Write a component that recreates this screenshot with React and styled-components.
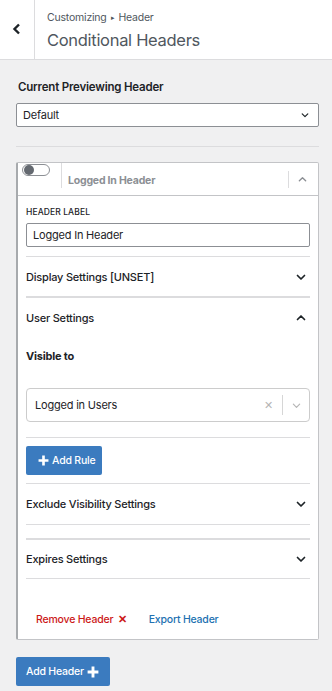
import React from 'react';
import styled, { createGlobalStyle } from 'styled-components';

const GlobalStyle = createGlobalStyle`
  body {
    margin: 0;
    background: #f0f0f1;
    font-family: Inter, "Noto Sans", sans-serif;
    color: #1d2327;
    letter-spacing: -0.2px;
  }
  * { box-sizing: border-box; }
`;

function Chevron({ up, size = 10, color = '#1d2327', width = 1.7 }) {
  return (
    <svg width={size} height={size} viewBox="0 0 10 10">
      <path
        d={up ? 'M1.5 6.5 L5 3 L8.5 6.5' : 'M1.5 3.5 L5 7 L8.5 3.5'}
        fill="none"
        stroke={color}
        strokeWidth={width}
        strokeLinecap="round"
        strokeLinejoin="round"
      />
    </svg>
  );
}

function Plus({ size = 11 }) {
  return (
    <svg width={size} height={size} viewBox="0 0 10 10">
      <path d="M5 0.5 V9.5 M0.5 5 H9.5" stroke="#fff" strokeWidth="2.4" />
    </svg>
  );
}

function App() {
  return (
    <>
      <GlobalStyle />
      <TopBar>
        <BackButton>
          <svg width="10" height="12" viewBox="0 0 10 12">
            <path d="M7 1.5 L2.5 6 L7 10.5" fill="none" stroke="#1d2327" strokeWidth="2.4" />
          </svg>
        </BackButton>
        <TitleBlock>
          <Crumb>
            Customizing<Arrow>▸</Arrow>Header
          </Crumb>
          <PageTitle>Conditional Headers</PageTitle>
        </TitleBlock>
      </TopBar>

      <Content>
        <SectionLabel>Current Previewing Header</SectionLabel>
        <PlainSelect>
          <span>Default</span>
          <Chevron size={8} width={1.5} />
        </PlainSelect>
        <Divider />

        <Card>
          <CardHeader>
            <ToggleCell>
              <Toggle />
            </ToggleCell>
            <CardTitle>Logged In Header</CardTitle>
            <CollapseCell>
              <Chevron up size={9} color="#8c8f94" width={1.5} />
            </CollapseCell>
          </CardHeader>

          <CardBody>
            <FieldLabel>Header Label</FieldLabel>
            <TextInput>Logged In Header</TextInput>

            <Panel $mt={9} $top="thin">
              <PanelRow>
                <span>Display Settings [UNSET]</span>
                <Chevron />
              </PanelRow>
            </Panel>

            <Panel $top="thick">
              <PanelRow>
                <span>User Settings</span>
                <Chevron up />
              </PanelRow>
              <RuleLabel>Visible to</RuleLabel>
              <MultiSelect>
                <span>Logged in Users</span>
                <SelectTools>
                  <ClearX>✕</ClearX>
                  <ToolSep />
                  <Chevron size={9} color="#b5b5b5" width={1.3} />
                </SelectTools>
              </MultiSelect>
            </Panel>

            <RuleArea>
              <BlueButton $pad="0 7px 0 12px">
                <Plus />
                Add Rule
              </BlueButton>
            </RuleArea>

            <Panel $bottom>
              <PanelRow $h={40}>
                <span>Exclude Visibility Settings</span>
                <Chevron />
              </PanelRow>
            </Panel>

            <Panel $mt={13} $top="thick">
              <PanelRow $h={38}>
                <span>Expires Settings</span>
                <Chevron />
              </PanelRow>
            </Panel>

            <Footer>
              <FooterLink $danger>
                Remove Header <RemoveX>✕</RemoveX>
              </FooterLink>
              <FooterLink>Export Header</FooterLink>
            </Footer>
          </CardBody>
        </Card>

        <AddHeaderRow>
          <BlueButton $pad="0 11px 0 10px">
            Add Header
            <Plus size={12} />
          </BlueButton>
        </AddHeaderRow>
      </Content>
    </>
  );
}

const TopBar = styled.div`
  display: flex;
  height: 60px;
  background: #fff;
  border-bottom: 1px solid #dcdcde;
`;

const BackButton = styled.div`
  width: 35px;
  display: flex;
  align-items: center;
  justify-content: center;
  border-right: 1px solid #dcdcde;
  padding-bottom: 2px;
`;

const TitleBlock = styled.div`
  display: flex;
  flex-direction: column;
  padding: 11px 0 0 12px;
`;

const Crumb = styled.div`
  font-size: 10.5px;
  line-height: 14px;
  color: #50575e;
`;

const Arrow = styled.span`
  display: inline-block;
  font-size: 7px;
  margin: 0 4px;
  position: relative;
  top: -1px;
`;

const PageTitle = styled.div`
  font-size: 16.5px;
  line-height: 22px;
  margin-top: 3px;
  color: #50575e;
  font-weight: 400;
  letter-spacing: -0.3px;
`;

const Content = styled.div`
  padding: 20px 13px 20px 16px;
`;

const SectionLabel = styled.div`
  font-size: 11.5px;
  line-height: 14px;
  font-weight: 600;
  color: #1d2327;
  margin-left: 2px;
`;

const PlainSelect = styled.div`
  margin-top: 9px;
  height: 24px;
  background: #fff;
  border: 1px solid #8c8f94;
  border-radius: 2px;
  display: flex;
  align-items: center;
  justify-content: space-between;
  padding: 0 9px 0 6px;
  font-size: 11px;
`;

const Divider = styled.div`
  height: 1px;
  background: #dcdcde;
  margin: 19px 0 15px;
`;

const Card = styled.div`
  background: #fff;
  border: 1px solid #c3c4c7;
  border-left: 2px solid #a7aaad;
  border-radius: 2px;
`;

const CardHeader = styled.div`
  display: flex;
  align-items: stretch;
  height: 33px;
  border-bottom: 1px solid #c3c4c7;
`;

const ToggleCell = styled.div`
  width: 44px;
  padding: 1px 0 0 4px;
  border-right: 1px solid #dcdcde;
  margin-bottom: 7px;
`;

const Toggle = styled.div`
  width: 28px;
  height: 12px;
  border: 1px solid #8c8f94;
  border-radius: 7px;
  position: relative;
  &::after {
    content: '';
    position: absolute;
    left: 1px;
    top: 0px;
    width: 10px;
    height: 10px;
    border-radius: 50%;
    background: #646970;
  }
`;

const CardTitle = styled.div`
  flex: 1;
  display: flex;
  align-items: center;
  padding: 2px 0 0 6px;
  font-size: 10.5px;
  font-weight: 700;
  color: #8c8f94;
`;

const CollapseCell = styled.div`
  width: 30px;
  margin: 8px 0 7px;
  border-left: 1px solid #dcdcde;
  display: flex;
  align-items: center;
  justify-content: center;
  padding-right: 2px;
`;

const CardBody = styled.div`
  padding: 0 8px 0 8px;
`;

const FieldLabel = styled.div`
  padding-top: 10px;
  font-size: 8.5px;
  line-height: 12px;
  font-weight: 500;
  text-transform: uppercase;
  letter-spacing: 0.1px;
`;

const TextInput = styled.div`
  margin-top: 5px;
  height: 24px;
  border: 1px solid #8c8f94;
  border-radius: 2px;
  display: flex;
  align-items: center;
  padding-left: 6px;
  font-size: 11px;
`;

const Panel = styled.div`
  margin-top: ${(p) => p.$mt || 0}px;
  border-top: ${(p) =>
    p.$top === 'thick' ? '2px solid #dcdcde' : p.$top === 'thin' ? '1px solid #dcdcde' : 'none'};
  border-bottom: ${(p) => (p.$bottom ? '1px solid #dcdcde' : 'none')};
`;

const PanelRow = styled.div`
  height: ${(p) => p.$h || 39}px;
  display: flex;
  align-items: center;
  justify-content: space-between;
  padding-right: 4px;
  font-size: 11px;
  font-weight: 500;
`;

const RuleLabel = styled.div`
  margin-top: 11px;
  font-size: 11px;
  line-height: 16px;
  font-weight: 700;
`;

const MultiSelect = styled.div`
  margin-top: 24px;
  height: 34px;
  border: 1px solid #cccccc;
  border-radius: 4px;
  display: flex;
  align-items: center;
  justify-content: space-between;
  padding: 0 8px 0 8px;
  font-size: 11px;
`;

const SelectTools = styled.div`
  display: flex;
  align-items: center;
  gap: 6px;
`;

const ClearX = styled.span`
  font-size: 11px;
  color: #b5b5b5;
  margin-right: 3px;
`;

const ToolSep = styled.span`
  width: 1px;
  height: 20px;
  background: #d6d6d6;
  margin-right: 3px;
`;

const RuleArea = styled.div`
  margin-top: 15px;
  border-top: 1px solid #dcdcde;
  padding: 8px 0 8px;
  border-bottom: 1px solid #dcdcde;
`;

const BlueButton = styled.div`
  display: inline-flex;
  align-items: center;
  gap: 3px;
  height: 29px;
  padding: ${(p) => p.$pad};
  background: #3b7bbf;
  border-radius: 2px;
  color: #fff;
  font-size: 10.5px;
  font-weight: 500;
`;

const AddHeaderRow = styled.div`
  margin-top: 17px;
`;

const Footer = styled.div`
  display: flex;
  gap: 22px;
  padding: 33px 0 11px 10px;
  border-top: 1px solid #dcdcde;
`;

const FooterLink = styled.span`
  font-size: 10.5px;
  line-height: 16px;
  font-weight: 500;
  color: ${(p) => (p.$danger ? '#cc1818' : '#2271b1')};
`;

const RemoveX = styled.span`
  font-weight: 800;
  margin-left: 2px;
`;

export default App;
